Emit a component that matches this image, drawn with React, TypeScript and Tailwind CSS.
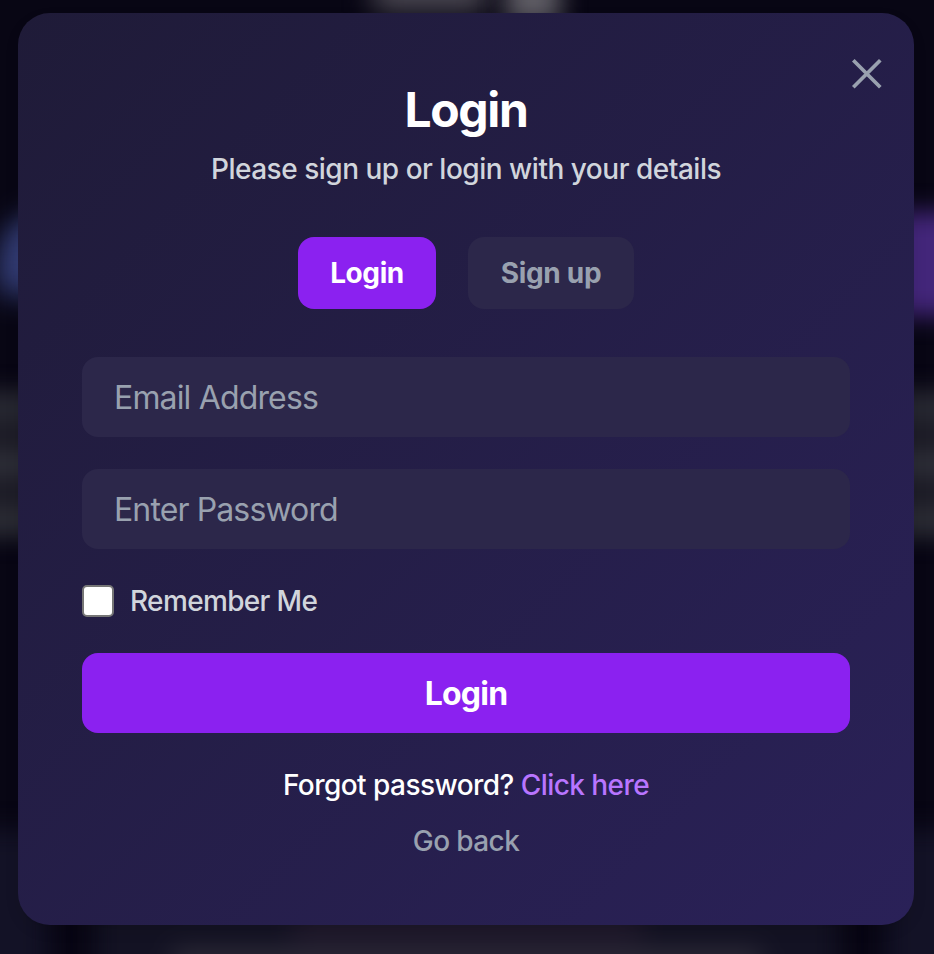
import React from "react";

// Out-of-focus page content that sits behind the dialog.
function Backdrop() {
  return (
    <div className="absolute inset-0 flex flex-col overflow-hidden bg-[#080614]" aria-hidden="true">
      <div className="flex h-[212px] shrink-0 justify-center gap-5">
        <div className="-mt-10 h-[52px] w-[112px] bg-[#4a4751] blur-[14px]" />
        <div className="-mt-10 h-[64px] w-[54px] bg-[#5e5c64] blur-[12px]" />
      </div>
      <div className="flex h-[100px] shrink-0 justify-between">
        <div className="h-[84px] w-[100px] -skew-x-12 rounded-[30px] bg-[#36407c] blur-[14px]" />
        <div className="-mr-12 h-[104px] w-[120px] rounded-[24px] bg-[#43267a] blur-[12px]" />
      </div>
      <div className="-mx-10 mt-[76px] flex h-[152px] shrink-0 flex-col justify-between bg-[#1c1b26] py-2 blur-[10px]">
        <div className="h-6 bg-[#292a33] blur-[6px]" />
        <div className="h-6 bg-[#2f3039] blur-[6px]" />
        <div className="h-6 bg-[#2d2e36] blur-[6px]" />
      </div>
      <div className="-mx-14 mt-[290px] flex h-[180px] shrink-0 justify-between">
        <div className="w-[104px] bg-[#131226] blur-[12px]" />
        <div className="flex w-[744px] flex-col items-center bg-[#131223] pt-[70px] blur-[12px]">
          <div className="h-[48px] w-[350px] bg-[#1f182b] blur-[8px]" />
          <div className="h-[34px] w-[590px] bg-[#2b2936] blur-[4px]" />
        </div>
        <div className="w-[104px] bg-[#131226] blur-[12px]" />
      </div>
    </div>
  );
}

export default function App() {
  return (
    <main className="relative h-[954px] w-[934px] overflow-hidden px-[18px] pt-[13px] font-['Inter',sans-serif] antialiased">
      <Backdrop />
      <section className="relative flex h-[912px] w-[896px] flex-col items-center rounded-[32px] bg-linear-to-br/srgb from-[#1f1b38] to-[#2a2158] p-16 shadow-[0_6px_14px_rgba(0,0,0,0.1)]">
        <button aria-label="Close" className="absolute top-[45px] right-8 size-8">
          <svg viewBox="0 0 32 32" className="size-8" fill="none" stroke="#99a1af" strokeWidth="3.7" strokeLinecap="butt">
            <path d="M3.3 2.2 30.3 29.2M30.3 2.2 3.3 29.2" />
          </svg>
        </button>
        <h1 className="mb-2 pt-0.5 text-[48px] leading-[62px] font-bold tracking-[-1.4px] text-white">Login</h1>
        <p className="mb-12 text-[28px] leading-10 font-[450] whitespace-nowrap tracking-[-0.49px] text-[#d1d5dc]">Please sign up or login with your details</p>
        <div className="mb-12 flex gap-8">
          <button className="h-[72px] w-[138px] rounded-2xl bg-[#8b21f0] text-[28px] font-[650] tracking-[-0.4px] text-white">Login</button>
          <button className="h-[72px] w-[166px] rounded-2xl bg-[#2c274a] text-[28px] font-[650] tracking-[-0.3px] text-[#99a1af]">Sign up</button>
        </div>
        <form className="flex w-full flex-col gap-8">
          <input type="email" placeholder="Email Address" className="h-20 w-full rounded-2xl bg-[#2c274a] px-8 pt-px text-[32px] tracking-[-0.84px] text-white outline-none placeholder:text-[#99a1af]" />
          <input type="password" placeholder="Enter Password" className="h-20 w-full rounded-2xl bg-[#2c274a] px-8 pt-px text-[32px] tracking-[-0.88px] text-white outline-none placeholder:text-[#99a1af]" />
          <label className="flex h-10 items-center gap-4 text-[28px] leading-10 font-[450] tracking-[-0.65px] text-[#d1d5dc]">
            <input type="checkbox" className="size-8 appearance-none rounded-[5px] border-2 border-[#767676] bg-white" />
            <span>Remember Me</span>
          </label>
          <button type="button" className="h-20 w-full rounded-2xl bg-[#8b21f0] pt-0.5 text-[32px] font-[650] tracking-[-0.8px] text-white">Login</button>
        </form>
        <p className="mt-8 text-[28px] leading-10 font-[450] whitespace-nowrap tracking-[-0.55px] text-white">
          Forgot password? <a className="text-[#b875ff]">Click here</a>
        </p>
        <button className="mt-4 text-[28px] leading-10 font-[450] tracking-[-0.6px] text-[#99a1af]">Go back</button>
      </section>
    </main>
  );
}
